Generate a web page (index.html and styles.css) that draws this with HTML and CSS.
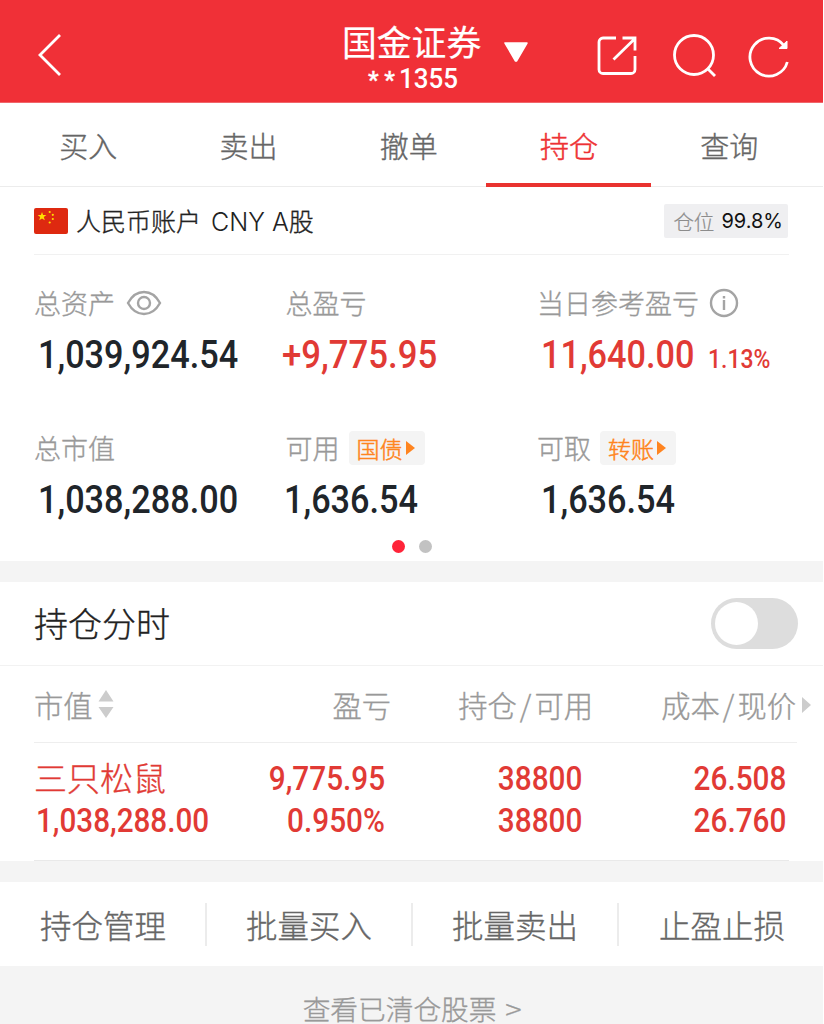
FILE: index.html
```html
<!DOCTYPE html>
<html lang="zh-CN">
<head>
<meta charset="utf-8">
<title>国金证券 持仓</title>
<link rel="stylesheet" href="styles.css">
</head>
<body>
<div class="app">
  <header class="topbar">
    <svg class="back" width="26" height="44" viewBox="0 0 26 44"><path d="M23 2 3 22 23 42"/></svg>
    <div class="broker">
      <div class="broker-name">国金证券</div>
      <div class="broker-id"><span class="stars">**</span><span class="num">1355</span></div>
    </div>
    <svg class="caret" width="26" height="20" viewBox="0 0 26 20"><path d="M2 1h22L13.500 19h-1z"/></svg>
    <div class="tools">
      <svg width="42" height="42" viewBox="0 0 42 42"><path d="M20 3H7A4 4 0 0 0 3 7v27.500a4 4 0 0 0 4 4h28a4 4 0 0 0 4-4V21M26.500 3H39V15.500M38.500 4 17.500 24.500"/></svg>
      <svg width="46" height="46" viewBox="0 0 46 46"><circle cx="22" cy="22" r="19.500"/><path d="m35.500 35.500 7.500 7.500"/></svg>
      <svg width="44" height="44" viewBox="0 0 44 44"><path d="M40.300 28A19 19 0 1 1 37 11.500"/><path class="solid" d="M40 7v7.500H32z"/></svg>
    </div>
  </header>

  <nav class="tabs">
    <a>买入</a><a>卖出</a><a>撤单</a><a class="active">持仓</a><a>查询</a>
  </nav>

  <section class="account">
    <svg class="flag" width="34" height="26" viewBox="0 0 34 26">
      <rect width="34" height="26" rx="2" fill="#de2910"/>
      <g fill="#ffde00">
        <path d="m8 4 1.100 3.100h3.300L9.800 9.100l1 3.200L8 10.400l-2.800 1.900 1-3.200-2.600-2h3.300z"/>
        <circle cx="15.700" cy="4" r="1.100"/><circle cx="18.800" cy="6.800" r="1.100"/><circle cx="18.800" cy="11" r="1.100"/><circle cx="15.700" cy="14.500" r="1.100"/>
      </g>
    </svg>
    <span class="account-name">人民币账户<span class="latin">CNY A</span>股</span>
    <span class="position"><span>仓位</span><b>99.8%</b></span>
  </section>

  <section class="summary">
    <div class="cell">
      <div class="label">总资产
        <svg class="eye" width="36" height="26" viewBox="0 0 36 26"><path d="M2 13Q8 2 18 2T34 13Q28 24 18 24T2 13Z"/><circle cx="18" cy="13" r="6"/></svg>
      </div>
      <div class="value"><span class="num">1,039,924.54</span></div>
    </div>
    <div class="cell middle">
      <div class="label">总盈亏</div>
      <div class="value up"><span class="num">+9,775.95</span></div>
    </div>
    <div class="cell">
      <div class="label">当日参考盈亏
        <svg class="info" width="30" height="30" viewBox="0 0 30 30"><circle cx="15" cy="15" r="13"/><path d="M15 12v10M15 8v2.500"/></svg>
      </div>
      <div class="value up"><span class="num">11,640.00</span><span class="num rate">1.13%</span></div>
    </div>
    <div class="cell">
      <div class="label">总市值</div>
      <div class="value"><span class="num">1,038,288.00</span></div>
    </div>
    <div class="cell middle">
      <div class="label">可用<span class="tag">国债<svg width="9" height="14" viewBox="0 0 9 14"><path d="M0 0 9 7 0 14z"/></svg></span></div>
      <div class="value"><span class="num">1,636.54</span></div>
    </div>
    <div class="cell">
      <div class="label">可取<span class="tag">转账<svg width="9" height="14" viewBox="0 0 9 14"><path d="M0 0 9 7 0 14z"/></svg></span></div>
      <div class="value"><span class="num">1,636.54</span></div>
    </div>
    <div class="dots"><i class="on"></i><i></i></div>
  </section>

  <section class="timeline">
    <span>持仓分时</span>
    <span class="switch"><i></i></span>
  </section>

  <section class="holdings">
    <div class="row head">
      <span class="c1">市值<svg width="16" height="28" viewBox="0 0 16 28"><path d="M8 0 15.500 11.500H.5zM8 28 .5 17h15z"/></svg></span>
      <span class="c2">盈亏</span>
      <span class="c3">持仓<i>/</i>可用</span>
      <span class="c4">成本<i>/</i>现价</span>
      <svg class="more" width="9" height="16" viewBox="0 0 9 16"><path d="M0 0 9 8 0 16z"/></svg>
    </div>
    <div class="row item">
      <span class="c1"><span class="stock">三只松鼠</span><span class="num">1,038,288.00</span></span>
      <span class="c2"><span class="num">9,775.95</span><span class="num">0.950%</span></span>
      <span class="c3"><span class="num">38800</span><span class="num">38800</span></span>
      <span class="c4"><span class="num">26.508</span><span class="num">26.760</span></span>
    </div>
  </section>

  <nav class="actions">
    <a>持仓管理</a><a>批量买入</a><a>批量卖出</a><a>止盈止损</a>
  </nav>
  <footer class="cleared">查看已清仓股票<span>&gt;</span></footer>
</div>
</body>
</html>
```
FILE: styles.css
```css
* { box-sizing: border-box; }
body {
  margin: 0;
  background: #fff;
  font-family: "Noto Sans CJK SC", sans-serif;
  font-weight: 300;
  -webkit-text-stroke: .35px currentColor;
  overflow: hidden;
}
.app { width: 823px; height: 1024px; background: #f4f4f4; overflow: hidden; }
svg { display: block; flex: none; }
i { font-style: normal; }
.num {
  display: inline-block;
  font-family: Roboto, sans-serif;
  font-weight: 500;
  -webkit-text-stroke: 0;
  white-space: nowrap;
  transform: scaleX(.89);
  transform-origin: left center;
}

.topbar {
  display: flex;
  height: 103px;
  padding-left: 37px;
  background: #f03037;
  border-bottom: 1px solid #f0666b;
  color: #fff;
}
.topbar svg { fill: none; stroke: #fff; stroke-width: 2.8; }
.back { margin-top: 33px; }
.broker { width: 140px; margin-left: 279px; }
.broker-name { margin-top: 21px; font-size: 34.8px; line-height: 40px; font-weight: 400; -webkit-text-stroke-width: .2px; white-space: nowrap; }
.broker-id { display: flex; margin-top: 4px; padding-left: 26px; font-size: 28.500px; line-height: 28px; }
.broker-id .stars { width: 31px; font-size: 24px; font-family: Roboto, sans-serif; font-weight: 500; letter-spacing: 5.500px; line-height: 30px; }
.broker-id .num { transform: scaleX(.91); }
.topbar .caret { margin: 42px 0 0 21px; fill: #fff; stroke: #fff; stroke-width: 1.500; stroke-linejoin: round; }
.tools { display: flex; align-items: center; gap: 34px; margin: 10px 0 0 67px; }
.tools svg + svg + svg { margin-left: -5px; }
.tools .solid { fill: #fff; stroke-width: 1; }

.tabs {
  display: grid;
  grid-template-columns: repeat(5, 160.3px);
  height: 84px;
  padding-left: 8px;
  background: #fff;
  border-bottom: 1px solid #ececec;
}
.tabs a {
  display: flex;
  justify-content: center;
  height: 84px;
  font-size: 29px;
  line-height: 84px;
  color: #666;
}
.tabs .active { width: 165px; margin-left: -2.500px; color: #ee3134; border-bottom: 4px solid #e9322f; -webkit-text-stroke-width: .5px; }

.account {
  display: flex;
  align-items: center;
  height: 68px;
  padding: 0 35px 0 34px;
  background: linear-gradient(#f1f1f1, #f1f1f1) 34px 67px / 755px 1px no-repeat #fff;
}
.account-name { margin: -2px 0 0 8px; font-size: 25px; color: #222; white-space: pre; }
.latin { padding: 0 0 0 10px; font-family: Inter, sans-serif; font-size: 25px; font-weight: 300; -webkit-text-stroke: 0; }
.position {
  display: flex;
  align-items: center;
  gap: 7px;
  height: 34px;
  margin-left: auto;
  padding: 0 5px 0 9px;
  background: #efeff1;
  border-radius: 2px;
  font-size: 20.500px;
  color: #8c8c8c;
  -webkit-text-stroke-width: .2px;
}
.position b { font: 400 20px Inter, sans-serif; -webkit-text-stroke: 0; color: #111; }

.summary {
  display: grid;
  grid-template-columns: repeat(3, 251.5px);
  grid-template-rows: 145px 136px 26px;
  height: 306px;
  padding-left: 34px;
  background: #fff;
}
.cell { padding-top: 29px; }
.label { display: flex; align-items: center; height: 40px; font-size: 27px; line-height: 36px; padding-bottom: 2px; color: #999; white-space: nowrap; }
.label > svg { fill: none; stroke: #a4a4a4; stroke-width: 2.4; }
.eye { margin-left: 11px; }
.info { margin-left: 10px; }
.value { display: flex; align-items: baseline; height: 60px; padding: 1px 0 0 3.500px; font-size: 38.500px; line-height: 60px; color: #20252a; }
.middle .value { padding-left: 0; margin-left: -2px; }
.middle .value.up { margin-left: -4px; }
.middle .value.up .num { transform: scaleX(.902); }
.up { color: #e13a35; }
.value .rate { margin-left: -5px; font-size: 25.500px; font-weight: 500; transform: scaleX(.9); }
.tag {
  display: flex;
  align-items: center;
  gap: 3px;
  width: 76px;
  height: 34px;
  margin-left: 9px;
  padding: 0 0 1px 8px;
  background: #f4f4f4;
  border-radius: 4px;
  font-size: 23px;
  color: #ff8420;
  -webkit-text-stroke-width: .5px;
}
.tag svg { fill: #ff8420; }
.dots { grid-column: 1 / -1; display: flex; justify-content: center; gap: 14px; padding: 4px 0 0 1px; }
.dots i { width: 13px; height: 13px; border-radius: 50%; background: #c2c2c2; }
.dots .on { background: #ff2439; }

.timeline {
  display: flex;
  align-items: center;
  justify-content: space-between;
  height: 84px;
  margin-top: 21px;
  padding: 0 25px 0 34px;
  background: #fff;
  border-bottom: 1px solid #f2f2f2;
  font-size: 34px;
  color: #222;
}
.timeline > span:first-child { margin-top: -3px; }
.switch { width: 87px; height: 51px; padding: 4px; border-radius: 26px; background: #ddd; }
.switch i { display: block; width: 43px; height: 43px; border-radius: 50%; background: #fff; }

.holdings { height: 195px; background: #fff; }
.row { display: grid; grid-template-columns: 200px 156px 202px 205px 1fr; padding-left: 34px; }
.head {
  align-items: center;
  height: 77px;
  font-size: 29.300px;
  line-height: 40px;
  color: #999;
  background: linear-gradient(#eee, #eee) 34px 76px / 763px 1px no-repeat;
}
.head span { margin-top: -2px; text-align: right; white-space: nowrap; }
.head .c1 { display: flex; align-items: center; gap: 5px; }
.head .c2, .head .c3 { margin-right: -1px; }
.head .c4 { margin-right: 1px; }
.head svg { fill: #ccc; }
.head i { padding: 0 3px; }
.more { margin-left: 5px; }
.item { color: #e13a35; height: 118px; padding-top: 15px; background: linear-gradient(#e9e9e9, #e9e9e9) 34px 117px / 755px 1px no-repeat; }
.item > span { display: flex; flex-direction: column; align-items: flex-end; font-size: 32.500px; line-height: 42px; }
.item > .c1 { align-items: flex-start; }
.item .num { transform: scaleX(.915); transform-origin: right center; }
.item .c1 .num { margin-left: 2px; transform: scaleX(.912); transform-origin: left center; }
.stock { height: 42px; font-size: 33px; line-height: 39px; white-space: nowrap; }
.item .c2 { padding-right: 5px; }
.item .c3 { padding-right: 10px; }
.item .c4 { padding-right: 11px; }

.actions {
  display: grid;
  grid-template-columns: repeat(4, 206px);
  height: 84px;
  margin-top: 21px;
  padding-left: 1px;
  background: #fff;
  overflow: hidden;
}
.actions a { display: block; height: 43px; margin-top: 21px; border-right: 2px solid #ececec; text-align: center; font-size: 31.500px; line-height: 42px; color: #666; }
.actions a:last-child { border-right: 0; }
.cleared { display: flex; justify-content: center; gap: 9px; padding-top: 27px; font-size: 27.700px; line-height: 30px; color: #999; }
.cleared span { transform: scaleX(1.1); }
```
